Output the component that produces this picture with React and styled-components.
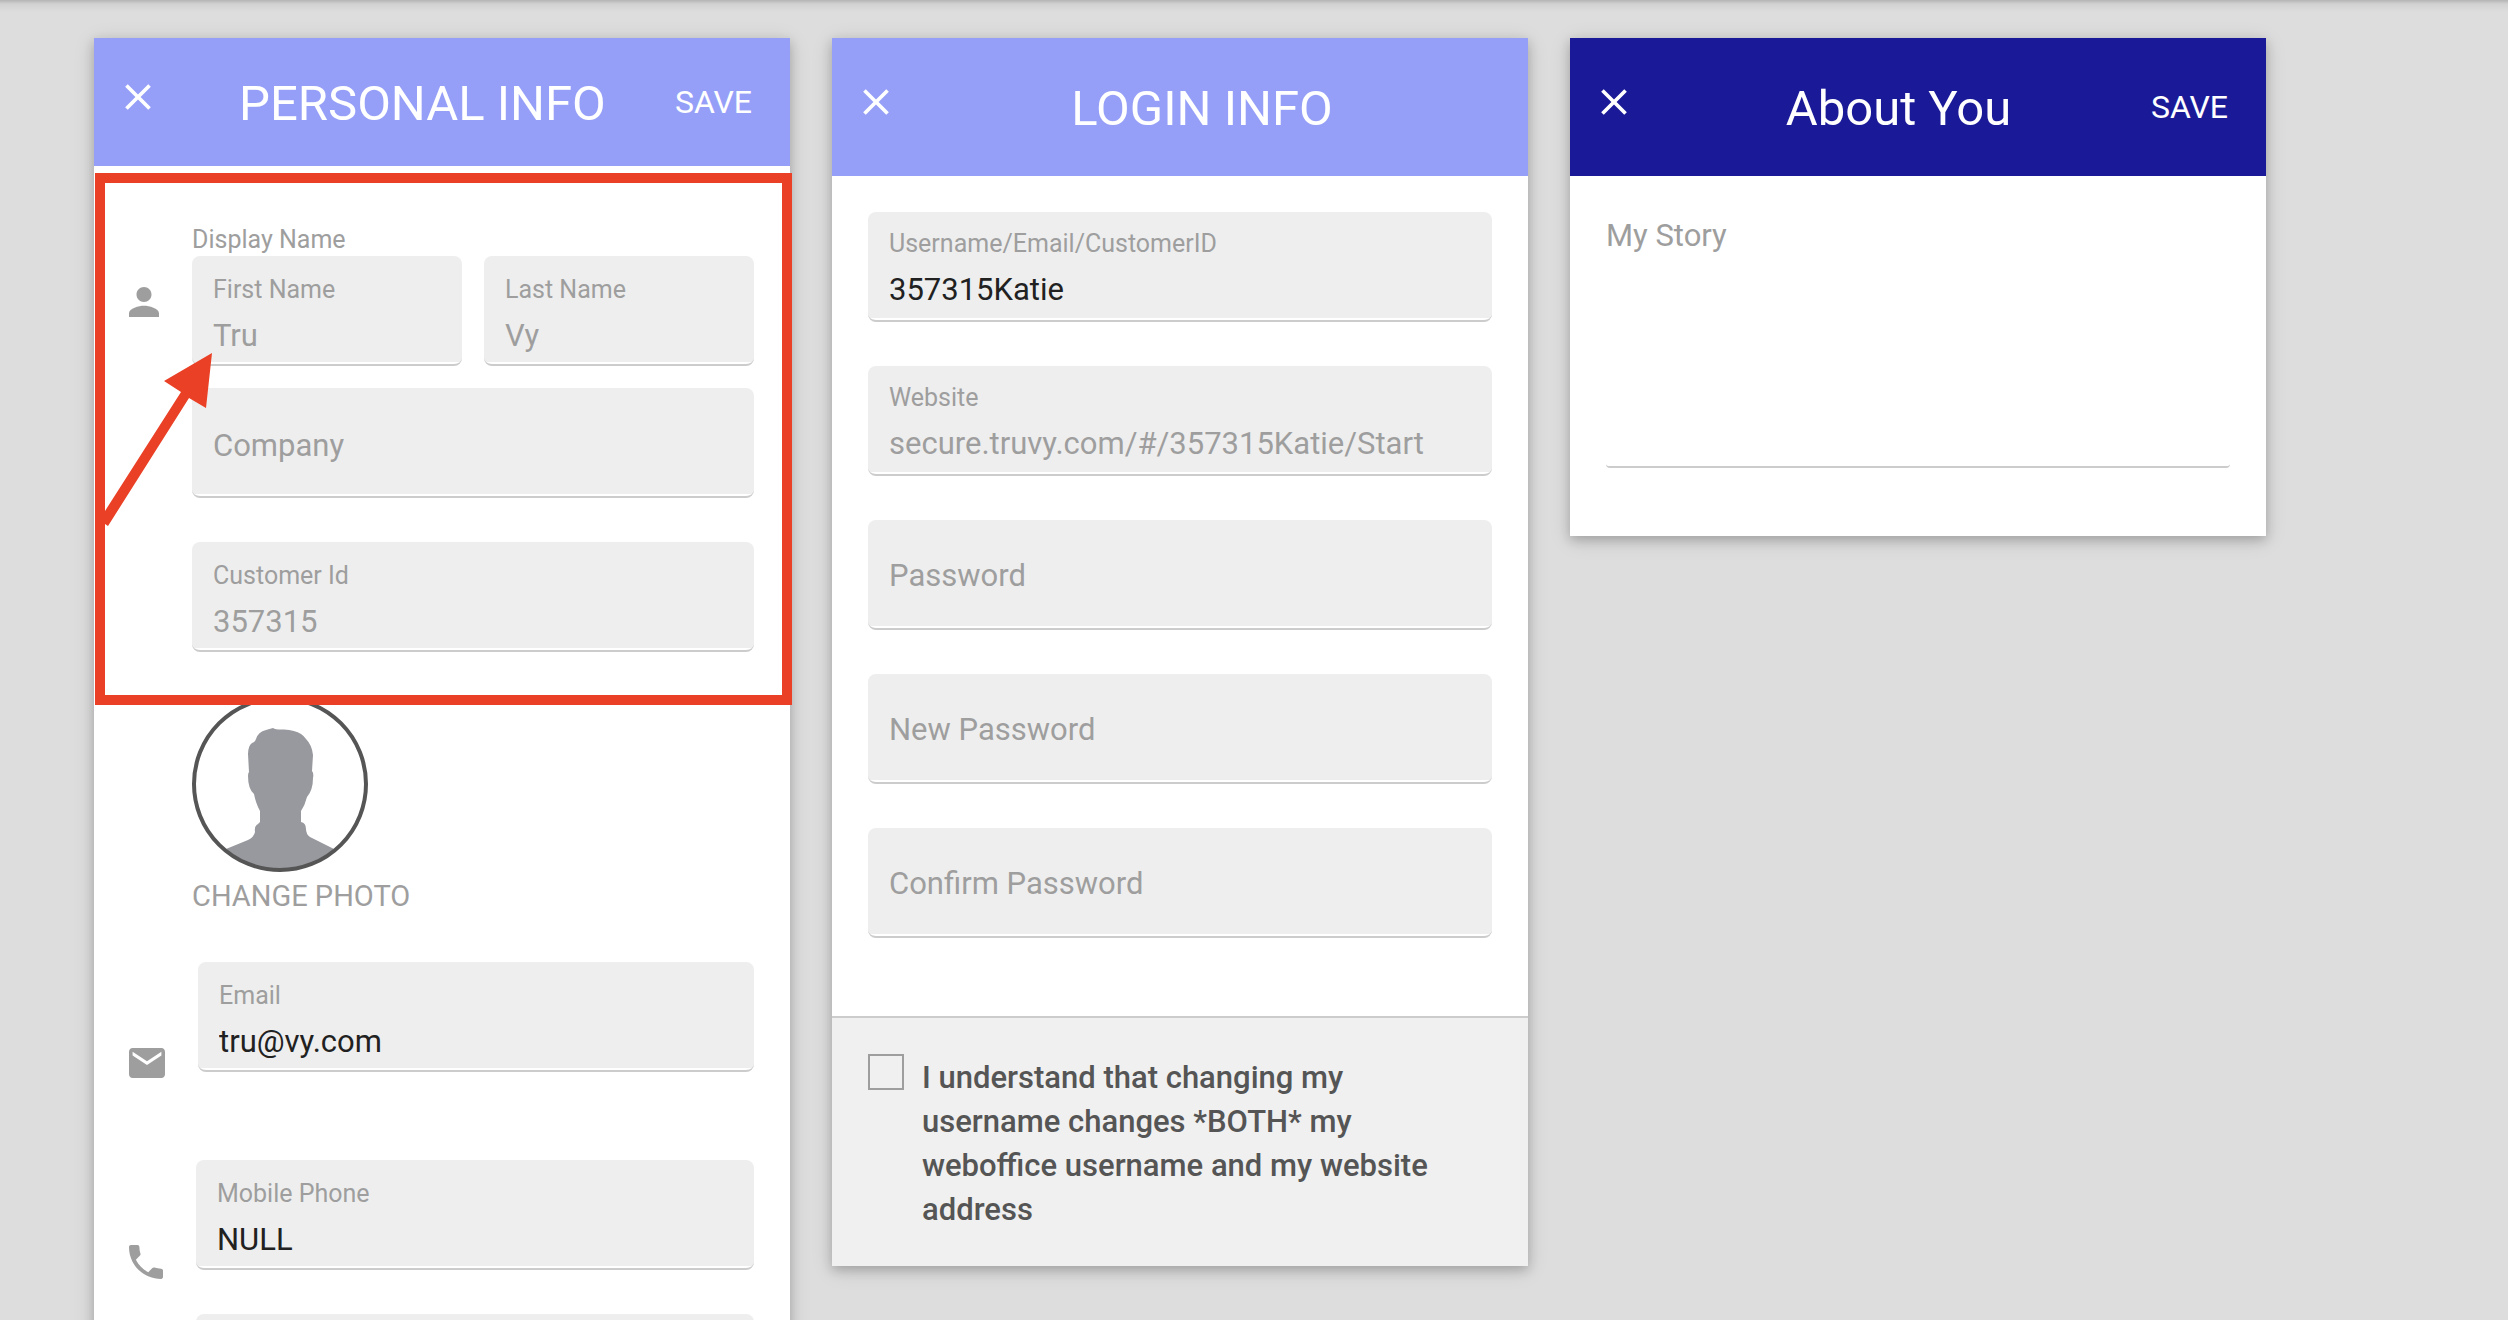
import React, { useState } from "react";
import styled, { createGlobalStyle } from "styled-components";

const GlobalStyle = createGlobalStyle`
  * {
    box-sizing: border-box;
  }
  body {
    margin: 0;
    background: #dddddd;
    font-family: Roboto, "Liberation Sans", sans-serif;
    overflow: hidden;
  }
  button, input, textarea {
    font-family: inherit;
    border: 0;
    padding: 0;
    margin: 0;
    outline: 0;
    background: none;
  }
`;

const Page = styled.main`
  height: 100vh;
  overflow: hidden;
  padding: 38px 94px 0;
  display: flex;
  align-items: flex-start;
  gap: 42px;
  background: linear-gradient(#b4b4b4, #d2d2d2 4px, #dddddd 12px);
`;

const Card = styled.section`
  flex: 0 1 30%;
  background: #ffffff;
  box-shadow: 0 4px 10px rgba(0, 0, 0, 0.18), 0 4px 20px rgba(0, 0, 0, 0.14);
`;

const Header = styled.header`
  display: flex;
  align-items: center;
  gap: 6px;
  padding: ${(props) => (props.$compact ? "36px" : "41px")} 38px
    ${(props) => (props.$compact ? "36px" : "41px")} 22px;
  background: ${(props) => (props.$dark ? "#1a1a99" : "#969ff8")};
  color: #ffffff;
`;

const CloseButton = styled.button`
  display: flex;
  color: inherit;
  padding: 0 10px 10px 0;
  cursor: pointer;
`;

const Title = styled.h2`
  flex: 1;
  margin: 0;
  text-align: center;
  font-size: 49px;
  line-height: 52px;
  padding-top: 4px;
  font-weight: 400;
`;

const SaveButton = styled.button`
  color: inherit;
  font-size: 32px;
  line-height: 36px;
  cursor: pointer;
`;

const Highlighted = styled.div`
  position: relative;
  padding-top: 58px;
  padding-bottom: 44px;
`;

/* red frame that is laid over the display name block */
const Frame = styled.div`
  position: absolute;
  top: 7px;
  left: 1px;
  right: -2px;
  bottom: -9px;
  border: 10px solid #ea4025;
  pointer-events: none;
  z-index: 1;
`;

const Arrow = styled.svg`
  position: absolute;
  top: 170px;
  left: 0;
  display: block;
`;

const IconRow = styled.div`
  --text-drop: 2px;
  display: flex;
  align-items: flex-start;
  gap: 33px;
  padding: 0 36px 0 35px;
`;

const RowIcon = styled.svg`
  flex: none;
  margin-top: ${(props) => props.$drop}px;
  fill: #9e9e9e;
`;

const Fields = styled.div`
  flex: 1;
  min-width: 0;
  display: flex;
  flex-direction: column;
  gap: 44px;
`;

const NameGroup = styled.div`
  display: grid;
  grid-template-columns: 1fr 1fr;
  gap: 22px;
`;

const GroupLabel = styled.div`
  font-size: 25px;
  line-height: 32px;
  color: #9e9e9e;
`;

const Wide = styled.div`
  grid-column: 1 / -1;
`;

const FieldBox = styled.div`
  height: 110px;
  padding: calc(${(props) => (props.$filled ? "16px" : "35px")} + var(--text-drop, 0px)) 21px 0;
  display: flex;
  flex-direction: column;
  border-radius: 8px;
  border-bottom: 2px solid #cccccc;
  background: linear-gradient(#ffffff, #ffffff) bottom / 100% 2px no-repeat, #eeeeee;
`;

const FieldLabel = styled.label`
  font-size: 25px;
  line-height: 32px;
  color: #9e9e9e;
`;

const FieldInput = styled.input`
  width: 100%;
  height: 40px;
  margin-top: ${(props) => (props.$filled ? "9px" : "0")};
  font-size: 31px;
  color: #212121;
  &:disabled {
    color: #9e9e9e;
  }
  &::placeholder {
    color: #9e9e9e;
    opacity: 1;
  }
`;

const Photo = styled.div`
  padding: 0 36px 42px 98px;
`;

const Avatar = styled.svg`
  display: block;
`;

const PhotoButton = styled.button`
  font-size: 29px;
  line-height: 48px;
  color: #9e9e9e;
  cursor: pointer;
`;

const Contact = styled.div`
  display: flex;
  flex-direction: column;
  gap: 82px;
`;

const LoginFields = styled.div`
  display: flex;
  flex-direction: column;
  gap: 44px;
  padding: 36px 36px 78px;
`;

const Agreement = styled.label`
  display: flex;
  align-items: flex-start;
  gap: 18px;
  padding: 36px 36px 34px;
  border-top: 2px solid #cccccc;
  background: #f0f0f0;
  color: #555555;
  font-size: 31px;
  line-height: 44px;
  font-weight: 500;
`;

const CheckBox = styled.input`
  appearance: none;
  flex: none;
  width: 36px;
  height: 36px;
  border: 2px solid #9e9e9e;
  &:checked {
    background: #969ff8;
  }
`;

const AgreementText = styled.span`
  padding-top: 2px;
  padding-right: 44px;
`;

const StoryBody = styled.div`
  padding: 36px 36px 68px;
`;

const Story = styled.textarea`
  display: block;
  width: 100%;
  height: 256px;
  padding-top: 2px;
  font-size: 31px;
  line-height: 44px;
  color: #212121;
  resize: none;
  border-bottom: 2px solid #cccccc;
  border-radius: 4px;
  &::placeholder {
    color: #9e9e9e;
    opacity: 1;
  }
`;

function CardHeader({ title, save, compact, dark }) {
  return (
    <Header $compact={compact} $dark={dark}>
      <CloseButton type="button" aria-label="Close">
        <svg width="44" height="44" viewBox="0 0 24 24" fill="currentColor">
          <path d="M19 6.41 17.59 5 12 10.59 6.41 5 5 6.41 10.59 12 5 17.59 6.41 19 12 13.41 17.59 19 19 17.59 13.41 12z" />
        </svg>
      </CloseButton>
      <Title>{title}</Title>
      {save && <SaveButton type="button">SAVE</SaveButton>}
    </Header>
  );
}

function Field({ id, label, initial, type = "text", disabled }) {
  const [value, setValue] = useState(initial || "");
  const filled = Boolean(initial);
  return (
    <FieldBox $filled={filled}>
      {filled && <FieldLabel htmlFor={id}>{label}</FieldLabel>}
      <FieldInput
        id={id}
        type={type}
        $filled={filled}
        value={value}
        disabled={disabled}
        placeholder={filled ? undefined : label}
        aria-label={filled ? undefined : label}
        onChange={(e) => setValue(e.target.value)}
      />
    </FieldBox>
  );
}

function PersonalInfo() {
  return (
    <Card>
      <CardHeader title="PERSONAL INFO" save compact />
      <Highlighted>
        <IconRow>
          <RowIcon $drop={63} width="30" height="30" viewBox="4 4 16 16">
            <path d="M12 12c2.21 0 4-1.79 4-4s-1.79-4-4-4-4 1.79-4 4 1.79 4 4 4zm0 2c-2.67 0-8 1.34-8 4v2h16v-2c0-2.66-5.33-4-8-4z" />
          </RowIcon>
          <Fields>
            <div>
              <GroupLabel>Display Name</GroupLabel>
              <NameGroup>
                <Field id="first" label="First Name" initial="Tru" disabled />
                <Field id="last" label="Last Name" initial="Vy" disabled />
                <Wide>
                  <Field id="company" label="Company" />
                </Wide>
              </NameGroup>
            </div>
            <Field id="customer" label="Customer Id" initial="357315" disabled />
          </Fields>
        </IconRow>
        <Frame>
          <Arrow width="120" height="190" viewBox="0 0 120 190" fill="#ea4025">
            <path d="M107 0 59 28 76 39 0 158V171L3 173 84 45 101 55Z" />
          </Arrow>
        </Frame>
      </Highlighted>
      <Photo>
        <Avatar width="176" height="176" viewBox="0 0 176 176">
          <clipPath id="round">
            <circle cx="88" cy="88" r="86" />
          </clipPath>
          <path
            clipPath="url(#round)"
            fill="#98999e"
            d="M81 32Q84 34 92 33.500Q103 34 109 38Q112 40 114 43Q120 49 121 59L120 75Q122 77 121 82Q121 94 115 101Q113 109 109 115V126Q114 127 114 133Q114 138 118 141L142 153Q160 165 160 176H16Q16 165 34 153L56 144Q62 141 63 136Q62 130 66 128L68 126V115Q64 108 62 98Q56 93 56 80Q56 77 57 76L56 58Q56 50 60 47Q63 46 64 43Q66 36 74 34Z"
          />
          <circle cx="88" cy="88" r="86" fill="none" stroke="#555555" strokeWidth="4" />
        </Avatar>
        <PhotoButton type="button">CHANGE PHOTO</PhotoButton>
      </Photo>
      <Contact>
        <IconRow>
          <RowIcon $drop={86} width="36" height="30" viewBox="2 4 20 16" preserveAspectRatio="none">
            <path d="M20 4H4c-1.100 0-1.990.9-1.990 2L2 18c0 1.100.9 2 2 2h16c1.100 0 2-.9 2-2V6c0-1.100-.9-2-2-2zm0 4-8 5-8-5V6l8 5 8-5v2z" />
          </RowIcon>
          <Fields>
            <Field id="email" label="Email" initial="tru@vy.com" />
          </Fields>
        </IconRow>
        <IconRow>
          <RowIcon $drop={85} width="34" height="34" viewBox="3 3 18 18">
            <path d="M6.620 10.790c1.440 2.830 3.760 5.140 6.590 6.590l2.200-2.200c.27-.27.67-.36 1.020-.24 1.120.37 2.330.57 3.570.57.55 0 1 .45 1 1V20c0 .55-.45 1-1 1-9.390 0-17-7.610-17-17 0-.55.45-1 1-1h3.500c.55 0 1 .45 1 1 0 1.250.2 2.450.57 3.570.11.35.03.74-.25 1.020l-2.200 2.200z" />
          </RowIcon>
          <Fields>
            <Field id="mobile" label="Mobile Phone" initial="NULL" />
            <Field id="home" label="Home Phone" />
          </Fields>
        </IconRow>
      </Contact>
    </Card>
  );
}

function LoginInfo() {
  return (
    <Card>
      <CardHeader title="LOGIN INFO" />
      <LoginFields>
        <Field id="username" label="Username/Email/CustomerID" initial="357315Katie" />
        <Field id="website" label="Website" initial="secure.truvy.com/#/357315Katie/Start" disabled />
        <Field id="password" label="Password" type="password" />
        <Field id="new-password" label="New Password" type="password" />
        <Field id="confirm-password" label="Confirm Password" type="password" />
      </LoginFields>
      <Agreement htmlFor="agree">
        <CheckBox id="agree" type="checkbox" />
        <AgreementText>
          I understand that changing my username changes *BOTH* my weboffice username and my
          website address
        </AgreementText>
      </Agreement>
    </Card>
  );
}

function AboutYou() {
  return (
    <Card>
      <CardHeader title="About You" save dark />
      <StoryBody>
        <Story placeholder="My Story" aria-label="My Story" />
      </StoryBody>
    </Card>
  );
}

export default function App() {
  return (
    <>
      <GlobalStyle />
      <Page>
        <PersonalInfo />
        <LoginInfo />
        <AboutYou />
      </Page>
    </>
  );
}
